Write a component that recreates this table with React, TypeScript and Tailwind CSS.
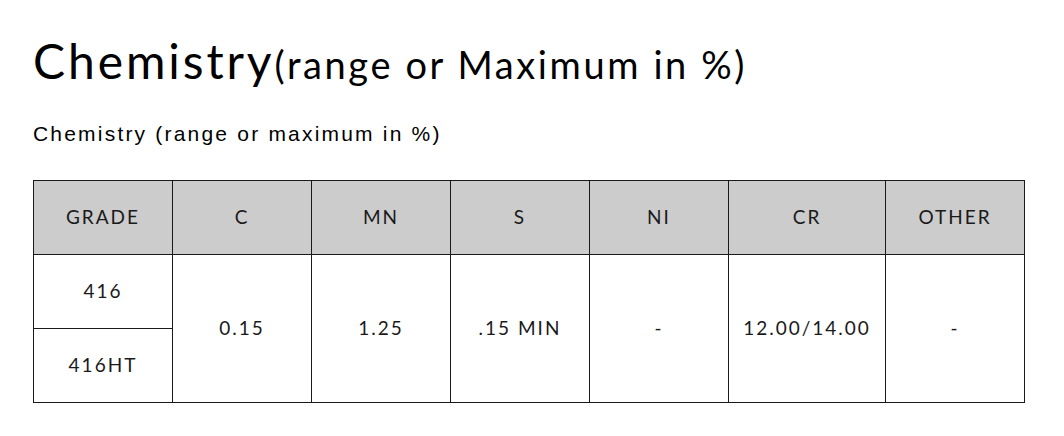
import React from 'react';

const headers = ['GRADE', 'C', 'MN', 'S', 'NI', 'CR', 'OTHER'];
const shared = ['0.15', '1.25', '.15 MIN', '-', '12.00/14.00', '-'];

const App: React.FC = () => {
  return (
    <div className="w-[1064px] h-[436px] bg-white px-[33px] pt-[37px] text-black font-['Lato',sans-serif]">
      {/* Title */}
      <h1 className="leading-none flex items-baseline h-[56px]">
        <span className="text-[48px] tracking-[2.9px]">Chemistry</span>
        <span className="text-[38px] tracking-[2.6px]">(range or Maximum in %)</span>
      </h1>

      <p className="mt-[30px] text-[21px] leading-none tracking-[2.2px] font-['Liberation_Sans',sans-serif]">
        Chemistry (range or maximum in %)
      </p>

      {/* Chemistry table */}
      <table className="mt-[36px] border-collapse text-[19px] tracking-[2px] text-[#1a1a1a]">
        <thead>
          <tr className="bg-[#cccccc] h-[74px]">
            {headers.map((h, i) => (
              <th
                key={h}
                className={`border border-[#1a1a1a] font-normal text-center ${i === 5 ? 'w-[157px]' : 'w-[139px]'}`}
              >
                {h}
              </th>
            ))}
          </tr>
        </thead>
        <tbody>
          <tr className="h-[74px]">
            <td className="border border-[#1a1a1a] text-center">416</td>
            {shared.map((v, i) => (
              <td key={i} rowSpan={2} className="border border-[#1a1a1a] text-center">
                {v}
              </td>
            ))}
          </tr>
          <tr className="h-[74px]">
            <td className="border border-[#1a1a1a] text-center">416HT</td>
          </tr>
        </tbody>
      </table>
    </div>
  );
};

export default App;
